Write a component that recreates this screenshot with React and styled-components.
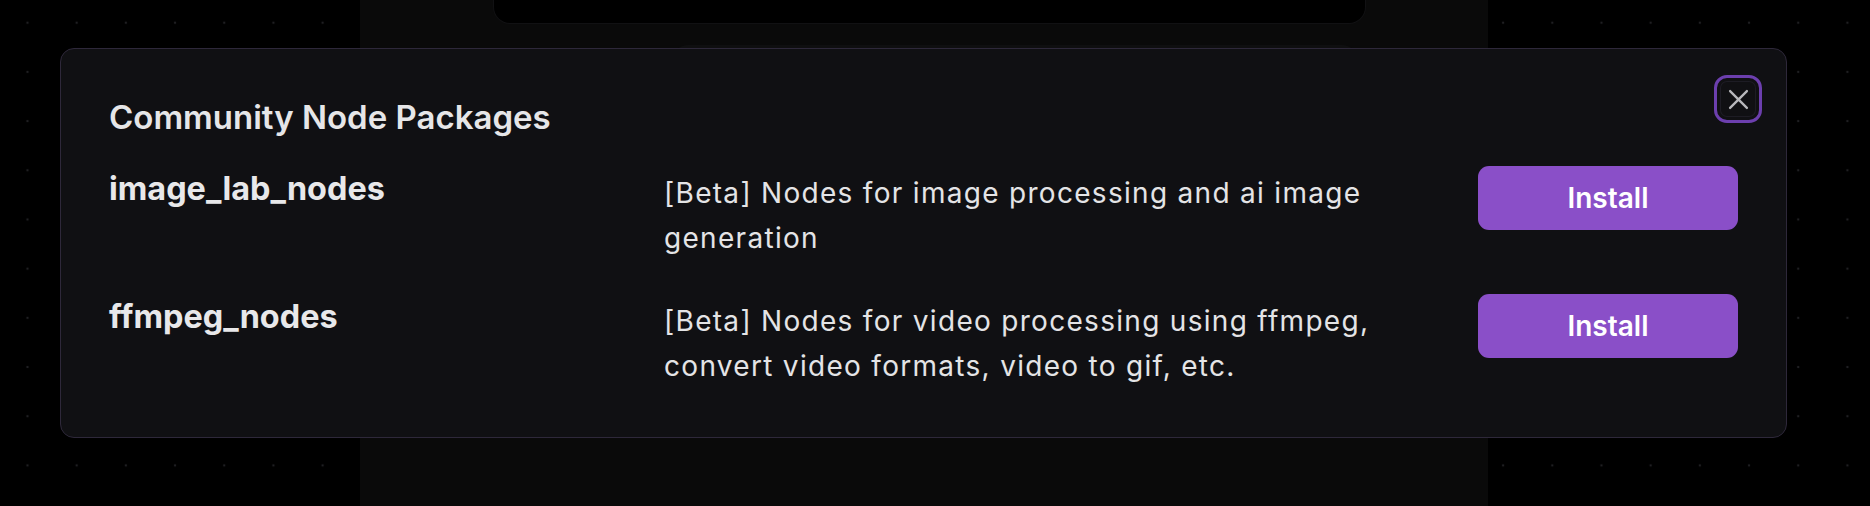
import React from 'react'
import styled, { createGlobalStyle } from 'styled-components'

const GlobalStyle = createGlobalStyle`
  html, body {
    margin: 0;
    padding: 0;
    background: #000;
  }
  body {
    font-family: Inter, "Noto Sans", "Liberation Sans", sans-serif;
    -webkit-font-smoothing: antialiased;
  }
`

const packages = [
  {
    name: 'image_lab_nodes',
    description: '[Beta] Nodes for image processing and ai image generation',
  },
  {
    name: 'ffmpeg_nodes',
    description: '[Beta] Nodes for video processing using ffmpeg, convert video formats, video to gif, etc.',
  },
]

const CloseIcon = () => (
  <svg width="21" height="21" viewBox="0 0 20 20" fill="none">
    <path d="M2 2 L18 18 M18 2 L2 18" stroke="#b8b8bc" strokeWidth="2.2" strokeLinecap="round" />
  </svg>
)

const App = () => {
  return (
    <Canvas>
      <GlobalStyle />
      <Column>
        <TopBar />
        <Card />
      </Column>
      <Modal role="dialog">
        <CloseButton aria-label="Close">
          <CloseIcon />
        </CloseButton>
        <Title>Community Node Packages</Title>
        <PackageGrid>
          {packages.map(pkg => (
            <React.Fragment key={pkg.name}>
              <PackageName>{pkg.name}</PackageName>
              <PackageDesc>{pkg.description}</PackageDesc>
              <InstallButton>Install</InstallButton>
            </React.Fragment>
          ))}
        </PackageGrid>
      </Modal>
    </Canvas>
  )
}

export default App

const Canvas = styled.div`
  position: relative;
  width: 1870px;
  height: 506px;
  overflow: hidden;
  display: flex;
  padding-left: 360px;
  box-sizing: border-box;
  background-color: #000;
  background-image: radial-gradient(circle, #1f1f22 1px, transparent 1.6px);
  background-size: 49.2px 49.2px;
  background-position: 2.9px -1.9px;
`

const Column = styled.div`
  width: 1128px;
  height: 100%;
  background: #0a0a0a;
  display: flex;
  flex-direction: column;
  align-items: flex-start;
`

const TopBar = styled.div`
  margin-left: 134px;
  width: 871px;
  height: 23px;
  background: #000;
  border-radius: 0 0 16px 16px;
  box-shadow: 0 0 0 1px #111113;
`

const Card = styled.div`
  margin-top: 22px;
  margin-left: 312px;
  width: 686px;
  height: 240px;
  background: #0f0f10;
  border-radius: 16px;
`

const Modal = styled.div`
  position: absolute;
  top: 48px;
  left: 60px;
  width: 1727px;
  box-sizing: border-box;
  padding: 48px;
  background: #101013;
  border: 1px solid #2e283a;
  border-radius: 14px;
  color: #e8e8ea;
`

const CloseButton = styled.button`
  position: absolute;
  top: 26px;
  right: 24px;
  width: 48px;
  height: 48px;
  padding: 0;
  display: flex;
  align-items: center;
  justify-content: center;
  background: #101013;
  border: 3px solid #6c3fae;
  border-radius: 13px;
  box-shadow: inset 0 0 0 3px #101013, inset 0 0 0 4px #1d1c24;
  cursor: pointer;
`

const Title = styled.h2`
  margin: 0;
  font-size: 33px;
  line-height: 40px;
  font-weight: 600;
  color: #e6e6e8;
`

const PackageGrid = styled.div`
  margin-top: 29px;
  display: grid;
  grid-template-columns: 515px 1fr 260px;
  column-gap: 40px;
  row-gap: 33px;
  align-items: start;
`

const PackageName = styled.div`
  font-size: 32.4px;
  line-height: 45px;
  font-weight: 700;
  color: #e8e8ea;
`

const PackageDesc = styled.div`
  padding-top: 5px;
  font-size: 28px;
  line-height: 45px;
  letter-spacing: 1.3px;
  font-weight: 400;
  color: #e4e4e6;
`

const InstallButton = styled.button`
  height: 64px;
  border: none;
  border-radius: 11px;
  background: #8a4fc8;
  color: #fff;
  font-family: inherit;
  font-size: 28px;
  font-weight: 600;
  cursor: pointer;
`
